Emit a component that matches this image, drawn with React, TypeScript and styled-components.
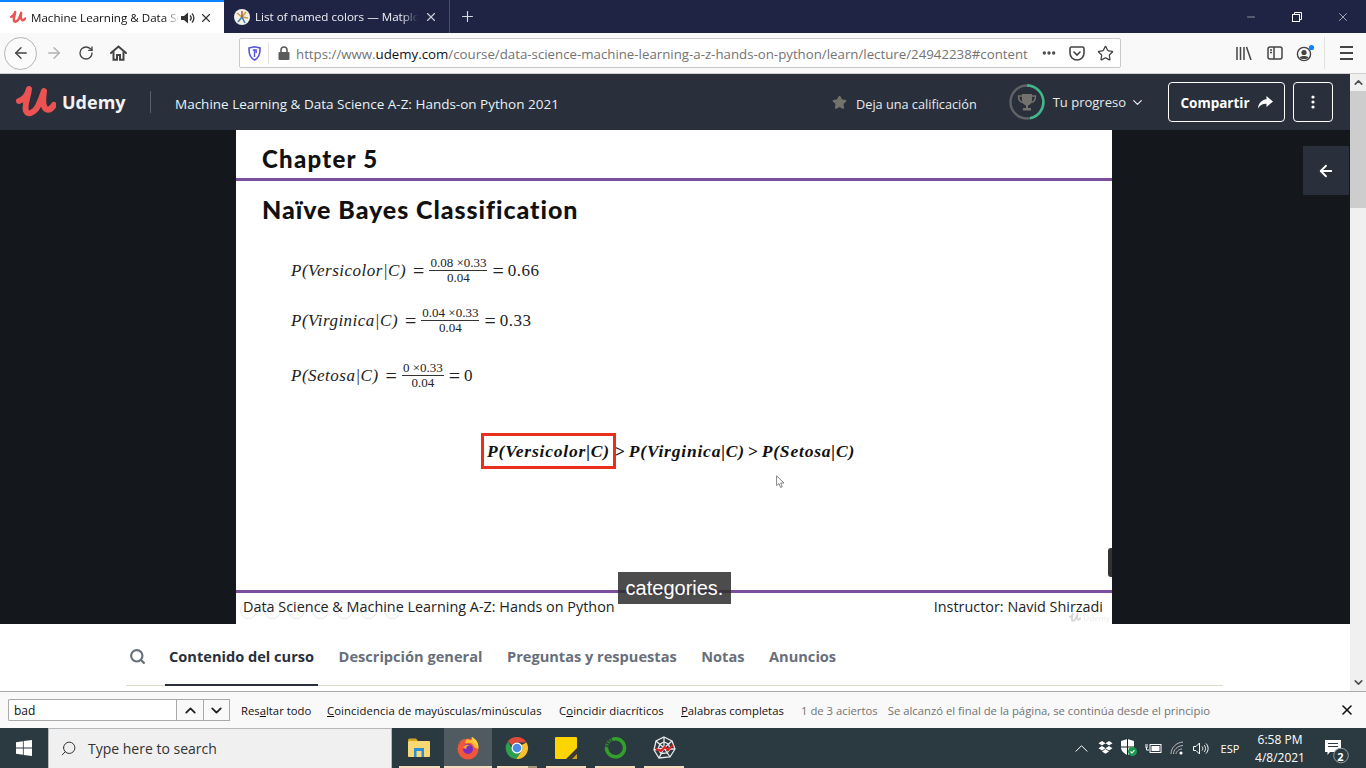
import React from 'react'
import styled, { createGlobalStyle } from 'styled-components'
import { ArrowLeft, ArrowRight, ChevronDown, ChevronUp, Minus, MoreHorizontal, Plus, RotateCw, Search, Star, X } from 'lucide-react'

const Global = createGlobalStyle`
  html, body { margin: 0; padding: 0; height: 100%; overflow: hidden; }
  body { font-family: "Open Sans", "Liberation Sans", sans-serif; }
  * { box-sizing: border-box; }
`

const UdemyMark = ({ size = 40 }: { size?: number }) => (
  <svg width={size} height={size * 0.9} viewBox="0 0 40 36" fill="none">
    <path d="M3 17 C9 15 12 9 13 5 C12 13 8 22 10 27 C12 32 19 28 22 22 C25 16 27 10 28 7 C27 14 26 22 30 25 C33 27 36 24 38 21" stroke="#ec5252" strokeWidth="6" strokeLinecap="round" strokeLinejoin="round" />
  </svg>
)

const HomeIcon = () => (
  <svg width="17" height="16" viewBox="0 0 17 16" fill="none" stroke="#444" strokeWidth="2">
    <path d="M1 8 L8.5 1.5 L16 8" strokeLinecap="round" />
    <path d="M3.5 6.5 V14.8 H7 V10 H10 V14.8 H13.5 V6.5" />
  </svg>
)

const ShieldIcon = () => (
  <svg width="13" height="15" viewBox="0 0 13 15" fill="none">
    <path d="M1 2 L6.5 .8 L12 2 C12.3 8 10.5 12 6.5 14 C2.5 12 .7 8 1 2Z" stroke="#5a55d8" strokeWidth="1.6" />
    <path d="M6.5 3.5 V11 M4.8 4 H8.2 V7" stroke="#5a55d8" strokeWidth="1.4" />
  </svg>
)

const LockIcon = () => (
  <svg width="12" height="14" viewBox="0 0 12 14">
    <path d="M3 6 V4 a3 3 0 0 1 6 0 V6" fill="none" stroke="#5b5b5b" strokeWidth="1.6" />
    <rect x="0.5" y="6" width="11" height="8" rx="1" fill="#5b5b5b" />
  </svg>
)

const PocketIcon = () => (
  <svg width="16" height="15" viewBox="0 0 16 15" fill="none" stroke="#444" strokeWidth="1.6">
    <path d="M1 2.5 C1 1.5 1.6 1 2.5 1 H13.5 C14.4 1 15 1.5 15 2.5 V7 C15 11 12 14 8 14 C4 14 1 11 1 7Z" />
    <path d="M5 6 L8 9 L11 6" strokeLinecap="round" />
  </svg>
)

const LibraryIcon = () => (
  <svg width="16" height="14" viewBox="0 0 16 14" stroke="#444" strokeWidth="1.5" fill="none">
    <path d="M1 1 V14 M4.5 1 V14 M8 1 V14 M10.5 1 L15 14" />
  </svg>
)

const SidebarIcon = () => (
  <svg width="16" height="14" viewBox="0 0 16 14" fill="none" stroke="#444" strokeWidth="1.5">
    <rect x="1" y="1" width="14" height="12" rx="2" />
    <path d="M7 1 V13 M3 4 H5 M3 6.5 H5" />
  </svg>
)

const AccountIcon = () => (
  <svg width="20" height="18" viewBox="0 0 20 18">
    <circle cx="8" cy="10" r="6.6" fill="none" stroke="#444" strokeWidth="1.4" />
    <circle cx="8" cy="8.5" r="2.6" fill="#444" />
    <path d="M3.5 13.5 C5 11.5 11 11.5 12.5 13.5 C11 15.5 5 15.5 3.5 13.5Z" fill="#444" />
    <circle cx="15.5" cy="3.5" r="2.6" fill="#0a84ff" />
  </svg>
)

const SpeakerIcon = () => (
  <svg width="14" height="12" viewBox="0 0 14 12" fill="#333">
    <path d="M0 4 H3 L7 .5 V11.5 L3 8 H0Z" />
    <path d="M9 3.5 C10.5 5 10.5 7 9 8.5 M11 1.5 C13.5 4 13.5 8 11 10.5" stroke="#333" strokeWidth="1.3" fill="none" />
  </svg>
)

const RestoreIcon = () => (
  <svg width="10" height="10" viewBox="0 0 10 10" fill="none" stroke="#fff" strokeWidth="1">
    <rect x=".5" y="2.5" width="7" height="7" />
    <path d="M2.5 2.5 V.5 H9.5 V7.5 H7.5" />
  </svg>
)

const ColorsFavicon = () => (
  <svg width="16" height="16" viewBox="0 0 16 16">
    <circle cx="8" cy="8" r="8" fill="#f1efe6" />
    <path d="M8 8 L3 4 M8 8 L12 3 M8 8 L14 9" stroke="#c9a23a" strokeWidth="1.6" />
    <path d="M8 8 L4 13 M8 8 L11 14" stroke="#4a7fa8" strokeWidth="1.6" />
    <path d="M8 8 L8 2" stroke="#a9503f" strokeWidth="1.4" />
  </svg>
)

const TrophyIcon = () => (
  <svg width="20" height="19" viewBox="0 0 20 19" fill="#73726c">
    <path d="M5 1 H15 V7 C15 10 13 12 11 12.5 V15 H14 V17.5 H6 V15 H9 V12.5 C7 12 5 10 5 7Z" />
    <path d="M5 3 H1.5 C1.5 7 3 9 6 9.5 M15 3 H18.5 C18.5 7 17 9 14 9.5" fill="none" stroke="#73726c" strokeWidth="1.5" />
  </svg>
)

const ProgressRing = () => (
  <svg width="36" height="36" viewBox="0 0 36 36" fill="none">
    <circle cx="18" cy="18" r="16.5" stroke="#5f6368" strokeWidth="2.4" />
    <path d="M18 1.5 A16.5 16.5 0 0 1 21 34.2" stroke="#3fb98a" strokeWidth="2.4" />
  </svg>
)

const ShareIcon = () => (
  <svg width="16" height="13" viewBox="0 0 16 13" fill="#fff">
    <path d="M9.5 0 L16 5.5 L9.5 11 V7.7 C5.5 7.5 3 9 .8 12.5 C1.5 7.5 4.5 3.8 9.5 3.3Z" />
  </svg>
)

const KebabIcon = () => (
  <svg width="4" height="14" viewBox="0 0 4 14" fill="#fff">
    <circle cx="2" cy="2" r="1.6" />
    <circle cx="2" cy="7" r="1.6" />
    <circle cx="2" cy="12" r="1.6" />
  </svg>
)

const CursorIcon = () => (
  <svg width="9" height="14" viewBox="0 0 9 14" fill="#fff" stroke="#777" strokeWidth=".9">
    <path d="M.6 .8 V10.5 L3 8.6 L4.6 12.5 L6.2 11.8 L4.7 8 H8Z" />
  </svg>
)

const WindowsLogo = () => (
  <svg width="16" height="16" viewBox="0 0 16 16" fill="#fff">
    <path d="M0 2.2 L6.9 1.2 V7.5 H0Z M7.7 1.1 L16 0 V7.5 H7.7Z M0 8.4 H6.9 V14.8 L0 13.8Z M7.7 8.4 H16 V16 L7.7 14.9Z" />
  </svg>
)

const ExplorerIcon = () => (
  <svg width="22" height="20" viewBox="0 0 22 20">
    <path d="M0 2 C0 1 1 .5 2 .5 H8 L10 3 H0Z" fill="#d9a520" />
    <rect x="0" y="3" width="22" height="16" rx="1" fill="#f8d775" />
    <path d="M6 10 H16 V19 H13.5 V13 H8.5 V19 H6Z" fill="#2a8fd8" />
  </svg>
)

const FirefoxIcon = () => (
  <svg width="24" height="24" viewBox="0 0 24 24">
    <circle cx="12" cy="13" r="10.5" fill="#f0563b" />
    <path d="M2 9 C3 5 7 2.5 11 3 C9 5 9 6.5 10 7.5 C13 6 17 7 18 11 L22 13 C22.5 7 19 3 15 1 C17 4 15 5 12.5 3.5 C7 2 3 5 2 9Z" fill="#ffbd2e" />
    <path d="M16 1 C20 3 23 7 22.5 13 C21.5 9 19.5 6.5 16.5 5.5Z" fill="#ffd23f" />
    <circle cx="12" cy="13" r="5" fill="#7b2fc0" />
    <path d="M7 12 C8 9 12 8 14 9.5 C11 9.5 10 11 10.5 13Z" fill="#f7a62e" />
  </svg>
)

const ChromeIcon = () => (
  <svg width="24" height="24" viewBox="0 0 24 24">
    <path d="M12 1 A11 11 0 0 1 21.5 6.5 H12 A5.5 5.5 0 0 0 7 9.5 L2.9 5.5 A11 11 0 0 1 12 1Z" fill="#e04a3a" />
    <path d="M21.5 6.5 A11 11 0 0 1 11 23 L16.5 15 A5.5 5.5 0 0 0 16.5 9Z" fill="#fbc02d" />
    <path d="M2.9 5.5 A11 11 0 0 0 11 23 L15 16.5 A5.5 5.5 0 0 1 7 12Z" fill="#2e9e4f" />
    <circle cx="12" cy="12" r="5.5" fill="#fff" />
    <circle cx="12" cy="12" r="4.3" fill="#4a8ae8" />
  </svg>
)

const StickyIcon = () => (
  <svg width="22" height="22" viewBox="0 0 22 22">
    <rect width="22" height="22" rx="1" fill="#fdd400" />
    <path d="M11 22 L22 11 V22Z" fill="#3a3a3a" />
    <path d="M17 22 L22 17 V22Z" fill="#c9a21a" />
  </svg>
)

const RingAppIcon = () => (
  <svg width="24" height="24" viewBox="0 0 24 24" fill="none">
    <path d="M9 3.5 A9 9 0 1 1 3.5 12" stroke="#33a02c" strokeWidth="3.5" />
    <path d="M3.5 12 A9 9 0 0 1 9 3.5" stroke="#2d8a2a" strokeWidth="3.5" strokeDasharray="1.5 1.2" />
  </svg>
)

const SpiderIcon = () => (
  <svg width="24" height="24" viewBox="0 0 24 24" fill="none" stroke="#e8e8e8" strokeWidth="1.3">
    <path d="M12 1 L20 5 L23 13 L18 21 L7 22 L2 14 L4 5Z" />
    <path d="M12 6 L16.5 8 L18 13 L15 17 L9 17.5 L6 13 L8 8Z" />
    <path d="M12 1 V12 M20 5 L12 12 M23 13 H12 M18 21 L12 12 M7 22 L12 12 M2 14 L12 12 M4 5 L12 12" />
    <path d="M4 13 L9 15 L13 11 L16 14 L21 9" stroke="#e02020" strokeWidth="2" />
  </svg>
)

const DropboxIcon = () => (
  <svg width="15" height="14" viewBox="0 0 15 14" fill="#fff">
    <path d="M4 0 L7.5 2.3 L4 4.6 L.5 2.3Z M11 0 L14.5 2.3 L11 4.6 L7.5 2.3Z M4 4.9 L7.5 7.2 L4 9.5 L.5 7.2Z M11 4.9 L14.5 7.2 L11 9.5 L7.5 7.2Z M4 10.4 L7.5 8 L11 10.4 L7.5 12.8Z" />
  </svg>
)

const DefenderIcon = () => (
  <svg width="18" height="18" viewBox="0 0 18 18">
    <path d="M1 2 L7.5 0 L14 2 V8 C14 12 11 14.5 7.5 16 C4 14.5 1 12 1 8Z" fill="#fff" />
    <path d="M7.5 0 V16 M1 8 H14" stroke="#222" strokeWidth="1" />
    <circle cx="12.5" cy="12.5" r="4.5" fill="#1a9a50" />
    <path d="M10.5 12.5 L12 14 L14.5 11.2" stroke="#fff" strokeWidth="1.1" fill="none" />
  </svg>
)

const BatteryIcon = () => (
  <svg width="17" height="11" viewBox="0 0 17 11" fill="none" stroke="#fff">
    <path d="M0 2 H3 M0 4 H3 M1.5 4 V7 H4" />
    <rect x="5" y="1.5" width="11" height="8" />
    <rect x="6.5" y="3" width="8" height="5" fill="#fff" stroke="none" />
  </svg>
)

const WifiIcon = () => (
  <svg width="14" height="14" viewBox="0 0 14 14" fill="none" stroke="#bbb" strokeWidth="1">
    <path d="M1 13 C1 7 6 1.5 13 1 M3.5 13 C3.5 9 7 5 13 4.5 M6 13 C6 11 8.5 8 12 8" />
    <circle cx="11" cy="12" r="1.6" fill="#fff" stroke="none" />
  </svg>
)

const VolumeIcon = () => (
  <svg width="16" height="13" viewBox="0 0 16 13" fill="none" stroke="#fff">
    <path d="M.5 4.5 H3 L6.5 1 V12 L3 8.5 H.5Z" />
    <path d="M9 4.5 C10 5.5 10 7.5 9 8.5 M11 3 C13 5 13 8 11 10 M13 1.5 C15.8 4.5 15.8 8.5 13 11.5" />
  </svg>
)

const TrayChevron = () => (
  <svg width="13" height="7" viewBox="0 0 13 7" fill="none" stroke="#fff">
    <path d="M.7 6.5 L6.5 .7 L12.3 6.5" />
  </svg>
)

const ActionCenter = () => (
  <svg width="25" height="24" viewBox="0 0 25 24">
    <path d="M0 0 H16 V12 H5 L2.5 15 V12 H0Z" fill="#fff" />
    <path d="M3 3.5 H13 M3 6.5 H13" stroke="#2b3a40" />
    <circle cx="16" cy="15.5" r="7.3" fill="#2b3a40" stroke="#9aa0a3" strokeWidth="1" />
  </svg>
)

const tabs = ['Contenido del curso', 'Descripción general', 'Preguntas y respuestas', 'Notas', 'Anuncios']
const findOptions = [
  { pre: 'Res', key: 'a', post: 'ltar todo', w: 86, ls: 0 },
  { pre: '', key: 'C', post: 'oincidencia de mayúsculas/minúsculas', w: 232, ls: 0.1 },
  { pre: 'C', key: 'o', post: 'incidir diacríticos', w: 122, ls: 0.1 },
  { pre: '', key: 'P', post: 'alabras completas', w: 120, ls: 0 },
]
const playerDots = [0, 1, 2, 3, 4, 5, 6]

const equations = [
  { left: 'P(Versicolor|C)', top: '0.08 ×0.33', result: '0.66', gap: 0 },
  { left: 'P(Virginica|C)', top: '0.04 ×0.33', result: '0.33', gap: 21 },
  { left: 'P(Setosa|C)', top: '0 ×0.33', result: '0', gap: 26 },
]

export default function App() {
  return (
    <Page>
      <Global />
      <TitleBar>
        <ActiveTab>
          <UdemyMark size={16} />
          <TabTitle $dark>Machine Learning &amp; Data Sc</TabTitle>
          <SpeakerIcon />
          <TabClose $dark><X size={14} strokeWidth={2} /></TabClose>
        </ActiveTab>
        <IdleTab>
          <ColorsFavicon />
          <TabTitle>List of named colors — Matplot</TabTitle>
          <TabClose><X size={14} strokeWidth={2} /></TabClose>
        </IdleTab>
        <NewTab><Plus size={17} strokeWidth={1.6} /></NewTab>
        <WindowControls>
          <WinBtn><Minus size={12} strokeWidth={1} /></WinBtn>
          <WinBtn><RestoreIcon /></WinBtn>
          <WinBtn><X size={14} strokeWidth={1} /></WinBtn>
        </WindowControls>
      </TitleBar>

      <NavBar>
        <BackBtn><ArrowLeft size={18} strokeWidth={1.8} /></BackBtn>
        <NavSlot $w={32} $muted><ArrowRight size={18} strokeWidth={1.8} /></NavSlot>
        <NavSlot $w={32}><RotateCw size={16} strokeWidth={2} /></NavSlot>
        <NavSlot $w={32}><HomeIcon /></NavSlot>
        <UrlBar>
          <ShieldIcon />
          <UrlDivider />
          <LockIcon />
          <UrlText>https://www.<b>udemy.com</b>/course/data-science-machine-learning-a-z-hands-on-python/learn/lecture/24942238#content</UrlText>
          <NavSlot $w={28}><MoreHorizontal size={16} strokeWidth={3} /></NavSlot>
          <NavSlot $w={28}><PocketIcon /></NavSlot>
          <NavSlot $w={28}><Star size={17} strokeWidth={1.8} /></NavSlot>
        </UrlBar>
        <RightTools>
          <NavSlot $w={31}><LibraryIcon /></NavSlot>
          <NavSlot $w={31}><SidebarIcon /></NavSlot>
          <NavSlot $w={31}><AccountIcon /></NavSlot>
          <ToolDivider />
          <Hamburger><span /><span /><span /></Hamburger>
        </RightTools>
      </NavBar>

      <Main>
        <Viewport>
          <CourseHeader>
            <UdemyMark size={40} />
            <Wordmark>Udemy</Wordmark>
            <HeaderDivider />
            <CourseTitle>Machine Learning &amp; Data Science A-Z: Hands-on Python 2021</CourseTitle>
            <HeaderRight>
              <RateLink><Star size={15} fill="#73726c" color="#73726c" /><span>Deja una calificación</span></RateLink>
              <Progress>
                <RingWrap><ProgressRing /><TrophySlot><TrophyIcon /></TrophySlot></RingWrap>
                <span>Tu progreso</span>
                <ProgressChevron size={15} strokeWidth={2} />
              </Progress>
              <OutlineBtn>Compartir <ShareIcon /></OutlineBtn>
              <KebabBtn><KebabIcon /></KebabBtn>
            </HeaderRight>
          </CourseHeader>

          <Player>
            <Slide>
              <ChapterRow>Chapter 5</ChapterRow>
              <SlideBody>
                <SlideTitle>Naïve Bayes Classification</SlideTitle>
                <Equations>
                  {equations.map(eq => (
                    <Equation key={eq.left} $gap={eq.gap}>
                      <MathVar>{eq.left}</MathVar>
                      <EqualSign>=</EqualSign>
                      <Fraction>
                        <span>{eq.top}</span>
                        <span>0.04</span>
                      </Fraction>
                      <EqualSign>=</EqualSign>
                      <MathResult>{eq.result}</MathResult>
                    </Equation>
                  ))}
                </Equations>
                <Compare>
                  <Highlight>P(Versicolor|C)</Highlight>
                  <Gt $tight>&gt;</Gt>
                  <span>P(Virginica|C)</span>
                  <Gt>&gt;</Gt>
                  <span>P(Setosa|C)</span>
                </Compare>
              </SlideBody>
              <SlideFooter>
                <FooterText>Data Science &amp; Machine Learning A-Z: Hands on Python</FooterText>
                <FooterText>Instructor: Navid Shirzadi</FooterText>
                <FaintDots>
                  {playerDots.map(d => <FaintDot key={d} />)}
                </FaintDots>
                <Watermark><UdemyMark size={12} /><span>Udemy</span></Watermark>
              </SlideFooter>
              <SlideHandle />
              <CursorSpot><CursorIcon /></CursorSpot>
            </Slide>
            <Caption>categories.</Caption>
            <SideToggle><ArrowLeft size={18} strokeWidth={2.4} /></SideToggle>
          </Player>

          <TabsBar>
            <TabsInner>
              <SearchSlot><Search size={17} strokeWidth={3} /></SearchSlot>
              {tabs.map((t, i) => (
                <CourseTab key={t} $active={i === 0}>{t}</CourseTab>
              ))}
            </TabsInner>
          </TabsBar>
        </Viewport>
        <Scrollbar>
          <ScrollArrow><ChevronUp size={13} strokeWidth={3} /></ScrollArrow>
          <ScrollThumb />
          <ScrollArrow><ChevronDown size={13} strokeWidth={3} /></ScrollArrow>
        </Scrollbar>
      </Main>

      <FindBar>
        <FindInput>bad</FindInput>
        <FindArrow><ChevronUp size={17} strokeWidth={2.6} /></FindArrow>
        <FindArrow $last><ChevronDown size={17} strokeWidth={2.6} /></FindArrow>
        <FindOptions>
          {findOptions.map(o => (
            <FindOption key={o.post} $w={o.w} $ls={o.ls}>{o.pre}<u>{o.key}</u>{o.post}</FindOption>
          ))}
        </FindOptions>
        <FindCount>1 de 3 aciertos</FindCount>
        <FindCount>Se alcanzó el final de la página, se continúa desde el principio</FindCount>
        <FindClose><X size={16} strokeWidth={2.4} /></FindClose>
      </FindBar>

      <TaskBar>
        <StartBtn><WindowsLogo /></StartBtn>
        <SearchBox>
          <FlippedSearch size={17} strokeWidth={1.4} />
          <span>Type here to search</span>
        </SearchBox>
        <TaskIcon $w={50} $first><ExplorerIcon /></TaskIcon>
        <TaskIcon $w={48} $active><FirefoxIcon /></TaskIcon>
        <TaskIcon $w={49} $split><ChromeIcon /></TaskIcon>
        <TaskIcon $w={49}><StickyIcon /></TaskIcon>
        <TaskIcon $w={49}><RingAppIcon /></TaskIcon>
        <TaskIcon $w={49}><SpiderIcon /></TaskIcon>
        <Tray>
          <TraySlot><TrayChevron /></TraySlot>
          <TraySlot><DropboxIcon /></TraySlot>
          <TraySlot><DefenderIcon /></TraySlot>
          <TraySlot><BatteryIcon /></TraySlot>
          <TraySlot><WifiIcon /></TraySlot>
          <TraySlot><VolumeIcon /></TraySlot>
          <TrayLang>ESP</TrayLang>
          <Clock><span>6:58 PM</span><span>4/8/2021</span></Clock>
          <NotifyWrap><ActionCenter /><NotifyCount>2</NotifyCount></NotifyWrap>
        </Tray>
      </TaskBar>
    </Page>
  )
}

const Page = styled.div`
  width: 1366px;
  height: 768px;
  display: flex;
  flex-direction: column;
  overflow: hidden;
  background: #fff;
`

const TitleBar = styled.div`
  height: 33px;
  flex: none;
  display: flex;
  background: #1f2445;
`

const ActiveTab = styled.div`
  width: 224px;
  display: flex;
  align-items: center;
  padding: 0 0 0 10px;
  background: #fff;
  border-top: 2px solid #0a84ff;
`

const IdleTab = styled.div`
  width: 226px;
  display: flex;
  align-items: center;
  padding: 0 0 0 10px;
  border-right: 1px solid #4a4e6a;
`

const TabTitle = styled.span<{ $dark?: boolean }>`
  flex: 1;
  min-width: 0;
  margin: 0 2px 0 5px;
  overflow: hidden;
  white-space: nowrap;
  font-size: 11.6px;
  color: ${p => (p.$dark ? '#111' : '#f0f0f4')};
  mask-image: linear-gradient(to right, #000 90%, transparent);
`

const TabClose = styled.span<{ $dark?: boolean }>`
  width: 22px;
  margin-right: 7px;
  flex: none;
  display: flex;
  justify-content: center;
  color: ${p => (p.$dark ? '#333' : '#c9cad3')};
`

const NewTab = styled.div`
  width: 34px;
  display: flex;
  align-items: center;
  justify-content: center;
  color: #d7d8e0;
`

const WindowControls = styled.div`
  margin-left: auto;
  display: flex;
  color: #fff;
`

const WinBtn = styled.div`
  width: 46px;
  display: flex;
  align-items: center;
  justify-content: center;
`

const NavBar = styled.div`
  height: 41px;
  flex: none;
  display: flex;
  align-items: center;
  padding-left: 4px;
  background: #f9f9fa;
  border-bottom: 1px solid #cfcfd1;
`

const BackBtn = styled.div`
  width: 33px;
  height: 33px;
  flex: none;
  display: flex;
  align-items: center;
  justify-content: center;
  margin-right: 1px;
  border: 1px solid #b5b5b5;
  border-radius: 50%;
  background: #fbfbfb;
  color: #444;
`

const NavSlot = styled.div<{ $w: number; $muted?: boolean }>`
  width: ${p => p.$w}px;
  flex: none;
  display: flex;
  align-items: center;
  justify-content: center;
  color: ${p => (p.$muted ? '#b1b1b3' : '#444')};
`

const UrlBar = styled.div`
  width: 882px;
  height: 30px;
  flex: none;
  margin-left: 105px;
  display: flex;
  align-items: center;
  padding: 0 1px 0 8px;
  background: #fff;
  border: 1px solid #c9c9c9;
  border-radius: 2px;
`

const UrlDivider = styled.div`
  width: 1px;
  height: 22px;
  margin: 0 9px 0 7px;
  background: #e4e4e4;
`

const UrlText = styled.div`
  flex: 1;
  min-width: 0;
  margin-left: 6px;
  padding-top: 1px;
  overflow: hidden;
  white-space: nowrap;
  font-size: 13.27px;
  color: #737373;

  b {
    font-weight: 400;
    color: #111;
  }
`

const RightTools = styled.div`
  margin-left: 107px;
  display: flex;
  align-items: center;
`

const ToolDivider = styled.div`
  width: 1px;
  height: 32px;
  margin-left: 3px;
  background: #e1e1e2;
`

const Hamburger = styled.div`
  width: 42px;
  display: flex;
  flex-direction: column;
  align-items: center;
  gap: 4px;

  span {
    width: 13px;
    height: 2px;
    background: #444;
  }
`

const Main = styled.div`
  flex: 1;
  min-height: 0;
  display: flex;
`

const Viewport = styled.div`
  flex: 1;
  min-width: 0;
  display: flex;
  flex-direction: column;
`

const CourseHeader = styled.div`
  height: 56px;
  flex: none;
  display: flex;
  align-items: center;
  padding: 0 17px 0 16px;
  background: #29303b;
  color: #fff;
`

const Wordmark = styled.span`
  width: 64px;
  margin-left: 6px;
  font: 700 18px "Open Sans", sans-serif;
  color: #f2f2f2;
`

const HeaderDivider = styled.div`
  width: 1px;
  height: 22px;
  margin: 0 24px;
  background: #5a6068;
`

const CourseTitle = styled.span`
  padding-top: 4px;
  font-size: 13.5px;
  color: #e8f0f8;
`

const HeaderRight = styled.div`
  margin-left: auto;
  display: flex;
  align-items: center;
`

const RateLink = styled.div`
  display: flex;
  align-items: center;
  gap: 9px;
  font-size: 12.7px;
  color: #e8e9eb;

  span {
    padding-top: 3px;
  }
`

const Progress = styled.div`
  margin-left: 32px;
  display: flex;
  align-items: center;
  gap: 8px;
  font-size: 13px;
  color: #e8e9eb;
`

const ProgressChevron = styled(ChevronDown)`
  margin-left: -4px;
`

const RingWrap = styled.div`
  position: relative;
  width: 36px;
  height: 36px;
`

const TrophySlot = styled.div`
  position: absolute;
  inset: 0;
  display: flex;
  align-items: center;
  justify-content: center;
`

const OutlineBtn = styled.div`
  width: 117px;
  height: 40px;
  margin-left: 23px;
  padding-top: 1px;
  display: flex;
  align-items: center;
  justify-content: center;
  gap: 7px;
  border: 1px solid #fff;
  border-radius: 4px;
  font-size: 13.5px;
  font-weight: 700;
`

const KebabBtn = styled.div`
  width: 40px;
  height: 40px;
  margin-left: 8px;
  display: flex;
  align-items: center;
  justify-content: center;
  border: 1px solid #fff;
  border-radius: 4px;
`

const Player = styled.div`
  position: relative;
  height: 494px;
  flex: none;
  display: flex;
  justify-content: center;
  padding-right: 1px;
  background: #14171c;
`

const Slide = styled.div`
  position: relative;
  width: 876px;
  margin-right: 1px;
  display: flex;
  flex-direction: column;
  background: #fff;
  overflow: hidden;
`

const ChapterRow = styled.div`
  height: 51px;
  flex: none;
  padding: 14px 0 0 26px;
  border-bottom: 3px solid #7b4f9e;
  font: 900 24px/30px Lato, sans-serif;
  letter-spacing: 1.25px;
  color: #111;
`

const SlideBody = styled.div`
  flex: 1;
  padding: 0 0 0 26px;
`

const SlideTitle = styled.div`
  margin-top: 13px;
  font: 900 25px/30px Lato, sans-serif;
  letter-spacing: 0.95px;
  color: #111;
`

const Equations = styled.div`
  margin: 32px 0 0 29px;
  display: flex;
  flex-direction: column;
  font: 400 17px "Liberation Serif", serif;
  color: #222;
`

const Equation = styled.div<{ $gap: number }>`
  display: flex;
  align-items: center;
  gap: 4px;
  margin-top: ${p => p.$gap}px;
`

const MathVar = styled.i`
  margin-right: 3px;
  letter-spacing: 0.5px;
`

const EqualSign = styled.span`
  font-size: 20px;
  line-height: 20px;
`

const MathResult = styled.span`
  letter-spacing: 0.5px;
`

const Fraction = styled.span`
  display: inline-flex;
  flex-direction: column;
  align-items: center;
  margin: 0 1px;
  font-size: 13px;
  line-height: 14px;

  span:first-child {
    padding: 0 1px;
    border-bottom: 1px solid #333;
  }
`

const Compare = styled.div`
  margin: 43px 0 0 219px;
  display: flex;
  align-items: center;
  font: italic 700 17.5px "Liberation Serif", serif;
  letter-spacing: 0.8px;
  color: #111;
`

const Highlight = styled.span`
  width: 135px;
  height: 36px;
  flex: none;
  display: flex;
  align-items: center;
  justify-content: center;
  border: 3px solid #e8301c;
`

const Gt = styled.span<{ $tight?: boolean }>`
  margin: 0 3px 0 ${p => (p.$tight ? '-1px' : '3px')};
  font-style: normal;
`

const SlideFooter = styled.div`
  position: relative;
  height: 34px;
  flex: none;
  display: flex;
  justify-content: space-between;
  padding: 4px 9px 0 7px;
  border-top: 3px solid #7b4f9e;
  color: #222;
`

const FooterText = styled.span`
  position: relative;
  z-index: 1;
  font-size: 14.4px;
  line-height: 20px;

  &:last-of-type {
    font-size: 14px;
  }
`

const FaintDots = styled.div`
  position: absolute;
  left: 4px;
  top: 9px;
  display: flex;
  gap: 7px;
`

const FaintDot = styled.div`
  width: 17px;
  height: 17px;
  border: 1px solid #e8e8e8;
  border-radius: 50%;
`

const Watermark = styled.span`
  position: absolute;
  right: 2px;
  top: 19px;
  display: flex;
  align-items: center;
  gap: 2px;
  font-size: 8px;
  line-height: 11px;
  color: #ddd;
  opacity: 0.6;

  svg path {
    stroke: #bbb;
  }
`

const SlideHandle = styled.div`
  position: absolute;
  right: 0;
  top: 418px;
  width: 4px;
  height: 29px;
  border-radius: 3px 0 0 3px;
  background: #333;
`

const CursorSpot = styled.div`
  position: absolute;
  left: 540px;
  top: 342px;
`

const Caption = styled.div`
  position: absolute;
  left: 618px;
  top: 442px;
  width: 113px;
  height: 32px;
  display: flex;
  align-items: center;
  justify-content: center;
  background: rgba(45, 45, 45, 0.85);
  font: 400 20px "Liberation Sans", sans-serif;
  color: #fff;
`

const SideToggle = styled.div`
  position: absolute;
  right: 1px;
  top: 16px;
  width: 46px;
  height: 49px;
  display: flex;
  align-items: center;
  justify-content: center;
  background: #29303b;
  color: #fff;
`

const TabsBar = styled.div`
  flex: 1;
  min-height: 0;
  padding: 0 127px 0 126px;
  background: #fff;
`

const TabsInner = styled.div`
  height: 62px;
  display: flex;
  align-items: stretch;
  gap: 24.5px;
  border-bottom: 1px solid #dcdacb;
`

const SearchSlot = styled.div`
  width: 22px;
  padding-top: 3px;
  display: flex;
  align-items: center;
  justify-content: center;
  margin-right: -3.5px;
  color: #686f7a;
`

const CourseTab = styled.div<{ $active?: boolean }>`
  height: 62px;
  padding: 3px 4px 0;
  margin: 0 -4px;
  display: flex;
  align-items: center;
  font-size: 14.6px;
  font-weight: 700;
  white-space: nowrap;
  color: ${p => (p.$active ? '#29303b' : '#686f7a')};
  border-bottom: 2px solid ${p => (p.$active ? '#29303b' : 'transparent')};
`

const Scrollbar = styled.div`
  width: 16px;
  flex: none;
  display: flex;
  flex-direction: column;
  background: #f0f0f0;
  color: #505050;
`

const ScrollArrow = styled.div`
  height: 17px;
  flex: none;
  display: flex;
  align-items: center;
  justify-content: center;
`

const ScrollThumb = styled.div`
  height: 117px;
  flex: none;
  margin-bottom: auto;
  background: #cdcdcd;
`

const FindBar = styled.div`
  height: 37px;
  flex: none;
  display: flex;
  align-items: center;
  padding: 0 11px 0 8px;
  background: #f9f9fa;
  border-top: 1px solid #a9a9a9;
  font-size: 11.3px;
  color: #111;
`

const FindInput = styled.div`
  width: 168px;
  height: 22px;
  padding: 1px 0 0 5px;
  background: #fff;
  border: 1px solid #a9a9ab;
  border-right: 0;
  border-radius: 2px 0 0 2px;
  font-size: 12px;
  line-height: 20px;
`

const FindArrow = styled.div<{ $last?: boolean }>`
  width: 27px;
  height: 22px;
  display: flex;
  align-items: center;
  justify-content: center;
  background: #f9f9fa;
  border: 1px solid #a9a9ab;
  border-right-width: ${p => (p.$last ? '1px' : '0')};
  color: #222;
`

const FindOptions = styled.div`
  margin-left: 11px;
  display: flex;
`

const FindOption = styled.span<{ $w: number; $ls: number }>`
  width: ${p => p.$w}px;
  letter-spacing: ${p => p.$ls}px;
  white-space: nowrap;
`

const FindCount = styled.span`
  margin-right: 10px;
  color: #737373;
  white-space: nowrap;
`

const FindClose = styled.div`
  margin-left: auto;
  display: flex;
  color: #111;
`

const TaskBar = styled.div`
  height: 40px;
  flex: none;
  display: flex;
  background: #2b3a40;
  color: #fff;
`

const StartBtn = styled.div`
  width: 48px;
  display: flex;
  align-items: center;
  justify-content: center;
`

const SearchBox = styled.div`
  width: 344px;
  display: flex;
  align-items: center;
  gap: 11px;
  padding-left: 11px;
  background: #f0f0f0;
  border: 1px solid #b5b9bb;
  border-bottom: 0;
  font-size: 14px;
  color: #333;
`

const FlippedSearch = styled(Search)`
  transform: scaleX(-1);
`

const TaskIcon = styled.div<{ $w: number; $active?: boolean; $first?: boolean; $split?: boolean }>`
  position: relative;
  width: ${p => p.$w}px;
  margin-left: ${p => (p.$first ? '2px' : '0')};
  display: flex;
  align-items: center;
  justify-content: center;
  background: ${p => (p.$active ? '#4f5b60' : 'transparent')};

  &::after {
    content: '';
    position: absolute;
    left: ${p => (p.$active ? '0' : '5px')};
    right: ${p => (p.$active ? '0' : '4px')};
    bottom: 0;
    height: 2px;
    background: ${p => (p.$split ? 'linear-gradient(to right, #f6dcbc 78%, #a89880 78%)' : '#f6dcbc')};
  }
`

const Tray = styled.div`
  margin-left: auto;
  display: flex;
  align-items: center;
  padding-right: 16px;
`

const TraySlot = styled.div`
  width: 24px;
  display: flex;
  justify-content: center;
`

const TrayLang = styled.span`
  width: 30px;
  margin-left: 2px;
  text-align: center;
  font-size: 11px;
`

const Clock = styled.div`
  width: 70px;
  padding-top: 1px;
  display: flex;
  flex-direction: column;
  align-items: center;
  font-size: 12px;
  line-height: 18px;
`

const NotifyWrap = styled.div`
  position: relative;
  width: 25px;
  height: 24px;
  margin: 8px 0 0 10px;
`

const NotifyCount = styled.span`
  position: absolute;
  right: 2px;
  bottom: 0;
  width: 15px;
  text-align: center;
  font-size: 11px;
  font-weight: 700;
  line-height: 15px;
  color: #fff;
`
